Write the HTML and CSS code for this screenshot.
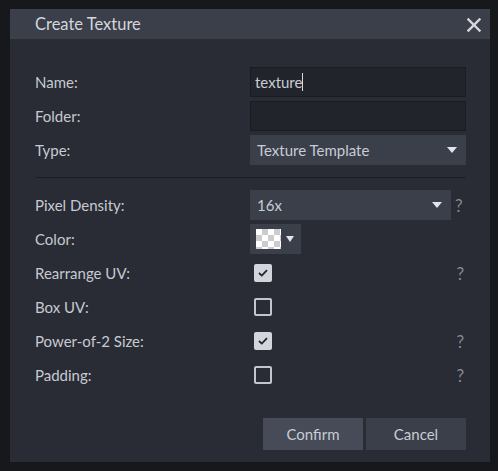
FILE: index.html
```html
<!DOCTYPE html>
<html>
<head>
<meta charset="utf-8">
<link rel="stylesheet" href="styles.css">
</head>
<body>
<div class="dialog">
  <div class="titlebar">
    <span class="title">Create Texture</span>
    <svg class="close" width="14" height="14" viewBox="0 0 14 14"><path d="M1.5 1.5 L12.5 12.5 M12.5 1.5 L1.5 12.5" stroke="#d6d8dd" stroke-width="2.4" stroke-linecap="square"/></svg>
  </div>
  <div class="content">
    <div class="row"><label class="lbl">Name:</label><div class="ctl"><div class="input">texture<span class="caret"></span></div></div></div>
    <div class="row"><label class="lbl">Folder:</label><div class="ctl"><div class="input"></div></div></div>
    <div class="row"><label class="lbl">Type:</label><div class="ctl"><div class="select full">Texture Template<span class="tri"></span></div></div></div>
    <div class="sep"></div>
    <div class="row"><label class="lbl">Pixel Density:</label><div class="ctl"><div class="select">16x<span class="tri"></span></div><span class="help">?</span></div></div>
    <div class="row"><label class="lbl">Color:</label><div class="ctl"><div class="color"><span class="swatch"></span><span class="tri small"></span></div></div></div>
    <div class="row"><label class="lbl">Rearrange UV:</label><div class="ctl"><span class="cb checked"><svg width="10" height="8" viewBox="0 0 10 8"><path d="M1 4 L3.8 6.6 L9 1.2" fill="none" stroke="#22252b" stroke-width="1.8"/></svg></span><span class="help">?</span></div></div>
    <div class="row"><label class="lbl">Box UV:</label><div class="ctl"><span class="cb"></span></div></div>
    <div class="row"><label class="lbl">Power-of-2 Size:</label><div class="ctl"><span class="cb checked"><svg width="10" height="8" viewBox="0 0 10 8"><path d="M1 4 L3.8 6.6 L9 1.2" fill="none" stroke="#22252b" stroke-width="1.8"/></svg></span><span class="help">?</span></div></div>
    <div class="row"><label class="lbl">Padding:</label><div class="ctl"><span class="cb"></span><span class="help">?</span></div></div>
    <div class="buttons">
      <button class="btn primary">Confirm</button>
      <button class="btn">Cancel</button>
    </div>
  </div>
</div>
</body>
</html>
```
FILE: styles.css
```css
html, body {
  margin: 0;
  padding: 0;
  background: #17181c;
  width: 498px;
  height: 471px;
  overflow: hidden;
  font-family: Lato, "Open Sans", sans-serif;
  color: #c8ccd4;
}
.dialog {
  margin: 9px 0 0 10px;
  width: 480px;
  height: 453px;
  background: #292c34;
  display: flex;
  flex-direction: column;
}
.titlebar {
  height: 30px;
  background: #3b3f4a;
  display: flex;
  align-items: center;
  justify-content: space-between;
  padding: 0 9px 0 25px;
}
.title {
  font-size: 16.5px;
  color: #d3d6dc;
}
.close { display: block; margin-top: 1px; }
.content {
  padding: 28px 24px 12px 25px;
  display: flex;
  flex-direction: column;
  gap: 4px;
}
.row {
  display: flex;
  align-items: center;
  height: 30px;
}
.lbl {
  width: 215px;
  font-size: 15px;
  color: #c6cad2;
}
.ctl {
  width: 216px;
  height: 30px;
  display: flex;
  align-items: center;
  position: relative;
}
.input {
  box-sizing: border-box;
  width: 216px;
  height: 30px;
  background: #21242a;
  border: 1px solid #1a1c20;
  font-size: 15px;
  padding: 0 0 0 4px;
  display: flex;
  align-items: center;
  color: #c8ccd4;
}
.caret {
  display: inline-block;
  width: 1px;
  height: 18px;
  background: #d8dade;
}
.select {
  box-sizing: border-box;
  width: 201px;
  height: 30px;
  background: #3b3f4a;
  font-size: 15px;
  padding: 0 9px 0 7px;
  display: flex;
  align-items: center;
  justify-content: space-between;
  color: #c8ccd4;
}
.select.full { width: 216px; }
.tri {
  width: 0;
  height: 0;
  border-left: 5px solid transparent;
  border-right: 5px solid transparent;
  border-top: 6px solid #e2e4e8;
}
.tri.small {
  border-left-width: 4px;
  border-right-width: 4px;
  border-top-width: 6px;
  margin-left: 5px;
}
.help {
  margin-left: 4px;
  font-size: 17px;
  color: #868a93;
  line-height: 1;
}
.cb + .help {
  margin-left: auto;
  margin-right: 2px;
}
.color {
  width: 51px;
  height: 30px;
  background: #3b3f4a;
  display: flex;
  align-items: center;
  padding-left: 6px;
  box-sizing: border-box;
}
.swatch {
  width: 25px;
  height: 20px;
  background-color: #ffffff;
  background-image:
    linear-gradient(45deg, #cccccc 25%, transparent 25%, transparent 75%, #cccccc 75%),
    linear-gradient(45deg, #cccccc 25%, transparent 25%, transparent 75%, #cccccc 75%);
  background-size: 12px 12px;
  background-position: 0 0, 6px 6px;
}
.cb {
  box-sizing: border-box;
  width: 18px;
  height: 18px;
  margin-left: 4px;
  border: 2px solid #c2c5cc;
  border-radius: 2px;
  display: flex;
  align-items: center;
  justify-content: center;
}
.cb.checked {
  background: #d2d5db;
  border-color: #d2d5db;
}
.cb svg { display: block; }
.sep {
  height: 1px;
  background: #1c1e23;
  margin: 8px 0 8px 0;
  width: 431px;
}
.buttons {
  margin-top: 24px;
  display: flex;
  justify-content: flex-end;
  gap: 3px;
}
.btn {
  width: 100px;
  height: 32px;
  border: none;
  background: #3b3f4a;
  color: #c8ccd4;
  font-family: Lato, "Open Sans", sans-serif;
  font-size: 15px;
  padding: 0;
}
.btn.primary { background: #464b57; }
```
